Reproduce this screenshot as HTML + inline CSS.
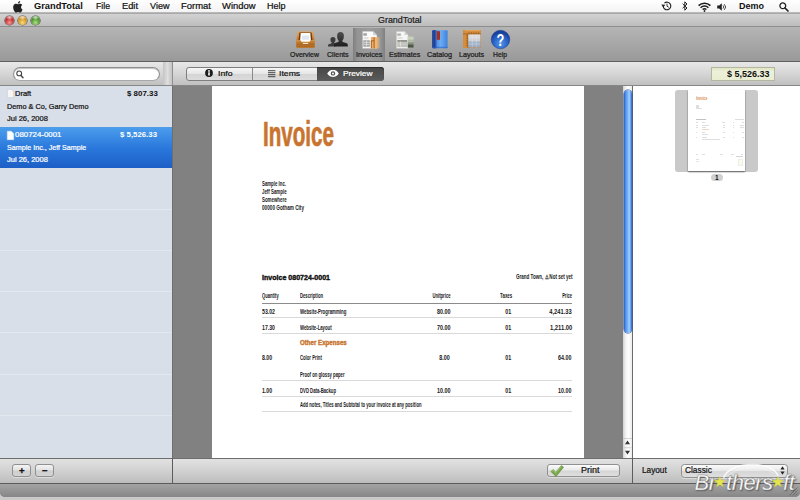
<!DOCTYPE html>
<html><head><meta charset="utf-8"><title>GrandTotal</title>
<style>
html,body{margin:0;padding:0}
body{width:800px;height:500px;overflow:hidden;position:relative;background:#c9c9c9;font-family:"Liberation Sans",sans-serif}
.a{position:absolute}
.t{position:absolute;white-space:nowrap;display:block;-webkit-text-stroke:.22px currentColor}
svg{position:absolute;overflow:visible}
.row{position:absolute;left:0;width:172px;height:1px;background:#e3e8ef}
.hl{position:absolute;left:262px;width:310px;height:1px;background:#d9d9d9}
.btn{position:absolute;border:1px solid #909090;border-radius:3px;background:linear-gradient(#fbfbfb,#e9e9e9 45%,#d6d6d6 55%,#dedede);box-sizing:border-box;box-shadow:0 1px 0 rgba(255,255,255,.4)}
</style></head><body>
<div class="a" style="left:0;top:13px;width:800px;height:484px;background:#808080;border-radius:0 0 5px 5px"></div>
<div class="a" style="left:0;top:0;width:800px;height:13px;background:linear-gradient(#ffffff,#f3f3f3);border-bottom:1px solid #b9b9b9;box-sizing:border-box"></div>
<div class="a" style="left:0;top:13px;width:800px;height:14px;background:linear-gradient(#d2d2d2,#bdbdbd);border-top:1px solid #a8a8a8;border-bottom:1px solid #8e8e8e;box-sizing:border-box"></div>
<div class="a" style="left:0;top:27px;width:800px;height:35px;background:linear-gradient(#b5b5b5,#999999);border-bottom:1px solid #5f5f5f;box-sizing:border-box"></div>
<div class="a" style="left:0;top:62px;width:800px;height:24px;background:linear-gradient(#e8e8e8,#d6d6d6 50%,#c0c0c0);border-bottom:1px solid #878787;box-sizing:border-box"></div>
<div class="a" style="left:163px;top:62px;width:9px;height:23px;background:linear-gradient(90deg,#c4c4c4,#dedede 50%,#c4c4c4)"></div>
<div class="a" style="left:172px;top:62px;width:1px;height:23px;background:#8f8f8f"></div>
<div class="a" style="left:4.9px;top:15.8px;width:9px;height:9px;border-radius:50%;background:radial-gradient(ellipse 38% 26% at 50% 18%,rgba(255,255,255,.75),rgba(255,255,255,0) 100%),radial-gradient(circle at 50% 74%,#f79a92,#b81c20 62%);box-shadow:0 0 0 0.6px rgba(50,40,40,.75),inset 0 1px 1px rgba(255,255,255,.35)"></div>
<div class="a" style="left:18.0px;top:15.8px;width:9px;height:9px;border-radius:50%;background:radial-gradient(ellipse 38% 26% at 50% 18%,rgba(255,255,255,.75),rgba(255,255,255,0) 100%),radial-gradient(circle at 50% 74%,#f8dc80,#c88a14 62%);box-shadow:0 0 0 0.6px rgba(50,40,40,.75),inset 0 1px 1px rgba(255,255,255,.35)"></div>
<div class="a" style="left:31.1px;top:15.8px;width:9px;height:9px;border-radius:50%;background:radial-gradient(ellipse 38% 26% at 50% 18%,rgba(255,255,255,.75),rgba(255,255,255,0) 100%),radial-gradient(circle at 50% 74%,#b4e088,#3c8a22 62%);box-shadow:0 0 0 0.6px rgba(50,40,40,.75),inset 0 1px 1px rgba(255,255,255,.35)"></div>
<div class="a" style="left:353px;top:28px;width:32px;height:33px;background:linear-gradient(90deg,#808080,#949494 14%,#9b9b9b 50%,#949494 86%,#808080)"></div>
<div class="a" style="left:0;top:86px;width:172px;height:372px;background:#d9dfe8"></div>
<div class="row" style="top:209px"></div>
<div class="row" style="top:250px"></div>
<div class="row" style="top:291px"></div>
<div class="row" style="top:332px"></div>
<div class="row" style="top:374px"></div>
<div class="row" style="top:415px"></div>
<div class="a" style="left:0;top:127px;width:172px;height:41px;background:linear-gradient(#4a9cec,#2a78dc 50%,#1c5fc6);border-top:1px solid #4f9be6;box-sizing:border-box"></div>
<div class="a" style="left:172px;top:86px;width:1px;height:397px;background:#6e6e6e"></div>
<div class="a" style="left:12.6px;top:67px;width:147.4px;height:13.6px;border-radius:7px;background:#fff;border:1px solid #8e8e8e;border-bottom-color:#a8a8a8;box-sizing:border-box;box-shadow:inset 0 1px 1px rgba(0,0,0,.25)"></div>
<svg style="left:15.6px;top:69.5px" width="8" height="9" viewBox="0 0 8 9"><circle cx="3.2" cy="3.4" r="2.4" fill="none" stroke="#444" stroke-width="1.1"/><path d="M4.9 5.3L7 7.8" stroke="#444" stroke-width="1.4" stroke-linecap="round"/></svg>
<svg style="left:6.5px;top:89px" width="7" height="9" viewBox="0 0 7 9"><path d="M0.3 0.3H4.4L6.7 2.6V8.7H0.3Z" fill="#f6f6f6" stroke="#c4c8ce" stroke-width=".6"/></svg>
<svg style="left:6.5px;top:130.5px" width="7" height="9" viewBox="0 0 7 9"><path d="M0.3 0.3H4.4L6.7 2.6V8.7H0.3Z" fill="#ffffff" stroke="#dfe9f7" stroke-width=".6"/></svg>
<div class="a" style="left:212px;top:86px;width:372px;height:372px;background:#fff"></div>
<div class="a" style="left:173px;top:86px;width:39px;height:372px;background:#818181"></div>
<div class="a" style="left:584px;top:86px;width:39px;height:372px;background:#818181"></div>
<div class="a" style="left:623px;top:86px;width:10px;height:372px;background:linear-gradient(90deg,#d2d2d2,#f2f2f2 30%,#ffffff 60%,#ececec);border-right:1px solid #6c6c6c;box-sizing:border-box"></div>
<div class="a" style="left:624px;top:90px;width:8px;height:243px;border-radius:4px;background:linear-gradient(90deg,#2a5cc0,#4c8ae8 18%,#7ab2f6 45%,#a0d0fc 66%,#5a98ee 86%,#2a5cc0);box-shadow:0 0 0 .5px #2a4f9a"></div>
<svg style="left:623px;top:438px" width="9" height="21" viewBox="0 0 9 21"><path d="M0 0.5H9" stroke="#bbb" stroke-width=".6"/><path d="M4.5 2.5L7 6.2H2Z M4.5 16.5L7 12.8H2Z" fill="#333"/><path d="M0.5 9.7H8.5" stroke="#bbb" stroke-width=".6"/></svg>
<div class="a" style="left:633px;top:86px;width:167px;height:372px;background:#fff"></div>
<div class="a" style="left:675px;top:90px;width:83px;height:82px;border-radius:3px;background:#c9c9c9"></div>
<div class="a" style="left:688px;top:90px;width:57.2px;height:81.2px;background:#fff;box-shadow:0 1px 1.5px rgba(0,0,0,.55)"></div>
<div class="a" style="left:710.5px;top:173.5px;width:12px;height:7.5px;border-radius:4px;background:#d0d0d0"></div>
<div class="a" style="left:0;top:458px;width:800px;height:26px;background:linear-gradient(#e2e2e2,#cfcfcf 55%,#bdbdbd);border-top:1px solid #6e6e6e;border-bottom:1px solid #5c5c5c;box-sizing:border-box"></div>
<div class="a" style="left:172px;top:458px;width:1px;height:25px;background:#5c5c5c"></div>
<div class="a" style="left:632px;top:458px;width:1px;height:25px;background:#5c5c5c"></div>
<div class="a" style="left:0;top:484px;width:800px;height:13px;background:linear-gradient(#a4a4a4,#868686);border-radius:0 0 5px 5px"></div>
<div class="btn" style="left:12px;top:463.6px;width:18.6px;height:13.8px;background:linear-gradient(#f4f4f4,#e2e2e2 45%,#cfcfcf 55%,#d4d4d4)"></div>
<div class="btn" style="left:35.3px;top:463.6px;width:18.6px;height:13.8px;background:linear-gradient(#f4f4f4,#e2e2e2 45%,#cfcfcf 55%,#d4d4d4)"></div>
<div class="btn" style="left:547px;top:463.8px;width:73px;height:13.4px"></div>
<div class="btn" style="left:681px;top:463.5px;width:107px;height:14px;border-radius:3.5px"></div>
<svg style="left:550px;top:464.5px" width="14" height="12" viewBox="0 0 14 12"><path d="M0.8 6.4L3.4 4.6L5.6 7.4L11.4 0.6L13.6 2.2L6 11.4Z" fill="#78a848" stroke="#557f2e" stroke-width=".5"/><path d="M1.6 6.4L3.3 5.3L5.6 8.2L11.5 1.4" fill="none" stroke="#a6cf7a" stroke-width=".7"/></svg>
<svg style="left:779.5px;top:466px" width="5" height="9" viewBox="0 0 5 9"><path d="M2.5 0.3L4.6 3.4H0.4Z M2.5 8.7L4.6 5.6H0.4Z" fill="#222"/></svg>
<svg style="left:789px;top:487px" width="9" height="9" viewBox="0 0 9 9"><path d="M8.5 0.5L0.5 8.5M8.5 3.5L3.5 8.5M8.5 6.5L6.5 8.5" stroke="#5f5f5f" stroke-width=".7"/></svg>
<div class="a" style="left:185.5px;top:67px;width:198px;height:13.5px;border-radius:3px;border:1px solid #7e7e7e;box-sizing:border-box;background:linear-gradient(#f6f6f6,#e6e6e6 48%,#d4d4d4 52%,#dcdcdc)"></div>
<div class="a" style="left:252px;top:67.5px;width:1px;height:12.5px;background:#8a8a8a"></div>
<div class="a" style="left:317px;top:67px;width:66.5px;height:13.5px;border-radius:0 3px 3px 0;background:linear-gradient(#474747,#5b5b5b);box-shadow:inset 0 1px 1px rgba(0,0,0,.4)"></div>
<svg style="left:205px;top:69.3px" width="8" height="8" viewBox="0 0 8 8"><circle cx="4" cy="4" r="3.9" fill="#1c1c1c"/><rect x="3.2" y="3.3" width="1.6" height="3.2" fill="#fff"/><circle cx="4" cy="1.9" r=".95" fill="#fff"/></svg>
<svg style="left:268px;top:70px" width="8" height="8" viewBox="0 0 8 8"><path d="M0 0.7H7.4M0 2.7H7.4M0 4.7H7.4M0 6.7H7.4" stroke="#333" stroke-width=".9"/></svg>
<svg style="left:327px;top:70px" width="12" height="7" viewBox="0 0 12 7"><path d="M0.2 3.5C2 0.6 4 0.1 6 0.1S10 0.6 11.8 3.5C10 6.4 8 6.9 6 6.9S2 6.4 0.2 3.5Z" fill="#fff"/><circle cx="6" cy="3.4" r="2.2" fill="#4f4f4f"/><circle cx="6" cy="3.4" r="1" fill="#fff"/></svg>
<div class="a" style="left:710.5px;top:67px;width:64px;height:13.5px;background:linear-gradient(#dfe4c3,#eef1da 30%,#e9edd0);border:1px solid #b3b79f;box-sizing:border-box"></div>
<svg style="left:12.6px;top:0.6px" width="9.8" height="11.6" viewBox="3 0 18.2 24"><path fill="#222" d="M12.152 6.896c-.948 0-2.415-1.078-3.96-1.04-2.04.027-3.91 1.183-4.961 3.014-2.117 3.675-.546 9.103 1.519 12.09 1.013 1.454 2.208 3.09 3.792 3.039 1.52-.065 2.09-.987 3.935-.987 1.831 0 2.35.987 3.96.948 1.637-.026 2.676-1.48 3.676-2.948 1.156-1.688 1.636-3.325 1.662-3.415-.039-.013-3.182-1.221-3.22-4.857-.026-3.04 2.48-4.494 2.597-4.559-1.429-2.09-3.623-2.324-4.39-2.376-2-.156-3.675 1.09-4.61 1.09zM15.53 3.83c.843-1.012 1.4-2.427 1.245-3.83-1.207.052-2.662.805-3.532 1.818-.78.896-1.454 2.338-1.273 3.714 1.338.104 2.715-.688 3.559-1.701"/></svg>
<svg style="left:661.4px;top:1.1px" width="11" height="10" viewBox="0 0 11 10"><path d="M2.2 5A3.8 3.8 0 1 0 3.4 2.2" fill="none" stroke="#222" stroke-width="1.1"/><path d="M0.3 3.6L2.3 6.4L4.3 3.8Z" fill="#222"/><path d="M6 2.6V5.2L7.8 6.3" fill="none" stroke="#222" stroke-width=".9"/></svg>
<svg style="left:682.4px;top:1.4px" width="6" height="10" viewBox="0 0 6 10"><path d="M0.6 2.8L5 7L2.8 9.2V0.8L5 3L0.6 7.2" fill="none" stroke="#222" stroke-width="1"/></svg>
<svg style="left:697.7px;top:1.6px" width="13" height="10" viewBox="0 0 13 10"><path d="M0.6 3.6A8.4 8.4 0 0 1 12.4 3.6" fill="none" stroke="#1c1c1c" stroke-width="1.6"/><path d="M2.6 5.7A5.5 5.5 0 0 1 10.4 5.7" fill="none" stroke="#1c1c1c" stroke-width="1.5"/><path d="M4.6 7.6A2.8 2.8 0 0 1 8.4 7.6" fill="none" stroke="#1c1c1c" stroke-width="1.4"/><circle cx="6.5" cy="9" r=".9" fill="#222"/></svg>
<svg style="left:717.2px;top:2.6px" width="10" height="8" viewBox="0 0 10 8"><path d="M0.2 2.6H2.2L4.8 0.3V7.7L2.2 5.4H0.2Z" fill="#222"/><path d="M6 2.4A2.2 2.2 0 0 1 6 5.6M7.3 1.2A4 4 0 0 1 7.3 6.8" fill="none" stroke="#222" stroke-width=".8"/></svg>
<svg style="left:778.5px;top:2px" width="10" height="10" viewBox="0 0 10 10"><circle cx="3.8" cy="3.8" r="2.9" fill="none" stroke="#222" stroke-width="1.3"/><path d="M6 6L9 9" stroke="#222" stroke-width="1.7" stroke-linecap="round"/></svg>
<svg style="left:295.6px;top:30.9px" width="19" height="17" viewBox="0 0 19 17"><defs><linearGradient id="og" x1="0" y1="0" x2="0" y2="1"><stop offset="0" stop-color="#e2a65c"/><stop offset=".5" stop-color="#c98032"/><stop offset="1" stop-color="#b56a22"/></linearGradient></defs><path d="M1.8 0.4H17.2L18.6 8V15.8Q18.6 16.8 17.6 16.8H1.4Q0.4 16.8 0.4 15.8V8Z" fill="url(#og)"/><path d="M3.4 1.5H15.6L16.6 9.8H2.4Z" fill="#70390c"/><path d="M4.7 2.1H14.3L15 10.8H4Z" fill="#fff"/><path d="M6.2 4.4H12.8L13.2 8.8H5.8Z" fill="#e1e7f1"/><path d="M0.4 9.5H4.6Q5.3 11.4 6.8 11.4H12.2Q13.7 11.4 14.4 9.5H18.6V15.8Q18.6 16.8 17.6 16.8H1.4Q0.4 16.8 0.4 15.8Z" fill="#c07a2c"/><path d="M0.4 9.8H4.4M14.6 9.8H18.6" stroke="#e6ac68" stroke-width=".7"/><path d="M0.6 13.2H18.4M0.6 15.2H18.4" stroke="#95561a" stroke-width=".7"/><path d="M6.8 11.8H12.2V13H6.8Z" fill="#f4e2c8"/></svg>
<svg style="left:327px;top:31px" width="21" height="16" viewBox="0 0 21 16"><defs><linearGradient id="pg" x1="0" y1="0" x2="0" y2="1"><stop offset="0" stop-color="#4e4e4e"/><stop offset="1" stop-color="#1e1e1e"/></linearGradient></defs><path d="M1 15.6V14.4Q1 13.2 2.4 12.9L4.2 12.4Q4.7 12.2 4.6 11.6Q3.4 10.4 3.4 8.8Q3.4 6.1 5.9 6.1Q8.5 6.1 8.5 8.8Q8.5 10.4 7.3 11.6Q7.2 12.2 7.7 12.4L8.6 12.6V15.6Z" fill="#3c3c3c"/><path d="M7 15.6V13.6Q7 12.2 8.6 11.8L11.2 11Q11.8 10.7 11.7 9.8Q10.1 8 10.1 5.2Q10.1 1.1 13.5 1.1Q16.9 1.1 16.9 5.2Q16.9 8 15.3 9.8Q15.2 10.7 15.8 11L18.4 11.8Q20.8 12.2 20.8 13.6V15.6Z" fill="url(#pg)"/></svg>
<svg style="left:361.5px;top:30.6px" width="19" height="18" viewBox="0 0 19 18"><defs><linearGradient id="ig" x1="0" y1="0" x2="1" y2="0"><stop offset="0" stop-color="#eda04c" stop-opacity=".95"/><stop offset=".6" stop-color="#f2ae62" stop-opacity=".85"/><stop offset=".8" stop-color="#f4bc80" stop-opacity=".5"/><stop offset="1" stop-color="#f6c48c" stop-opacity="0"/></linearGradient></defs><path d="M0.5 0.3H11L15 4.2V17.4H0.5Z" fill="#fbfbfb" stroke="#b0b0b0" stroke-width=".5"/><path d="M11 0.3V4.2H15Z" fill="#cfd3da"/><path d="M1.6 2.4H4.6V4.4H1.6ZM1.6 7H6.6M1.6 9.4H7.6V15.4H1.6Z" fill="#a4a4a4" stroke="#a4a4a4" stroke-width=".6"/><path d="M1.6 11.4H7.6M1.6 13.4H7.6M4.6 9.4V15.4" stroke="#f4f4f4" stroke-width=".6"/><rect x="8.9" y="6.1" width="9.6" height="11.3" fill="url(#ig)"/><path d="M9.3 9.6V17.2M12.1 6.1V17.4M9.3 9.8H12.1" stroke="#8e5016" stroke-width=".8" fill="none"/></svg>
<svg style="left:395.5px;top:30.6px" width="18" height="18" viewBox="0 0 18 18"><path d="M0.3 0.3H8.6L12.3 3.9V17.4H0.3Z" fill="#f5f6f3" stroke="#b0b0b0" stroke-width=".5"/><path d="M8.6 0.3V3.9H12.3Z" fill="#cdd0c8"/><path d="M1.6 2.8H4.6V4.6H1.6ZM1.6 7H6.6M1.6 9.6H11V15.6H1.6Z" fill="#b0b3ac" stroke="#b0b3ac" stroke-width=".6"/><path d="M1.6 12H11M1.6 13.9H11M4.6 9.6V15.6" stroke="#f1f2ee" stroke-width=".6"/><path d="M1.4 9.9H11.2" stroke="#6c6f68" stroke-width=".9"/><rect x="11.8" y="5.6" width="5.8" height="11" fill="#aeb8a2"/><rect x="11.8" y="5.6" width="5.8" height="2.6" fill="#c8d0bc"/><rect x="11.8" y="10.8" width="5.8" height="2.6" fill="#8a9480"/><rect x="11.8" y="13.4" width="5.8" height="3.2" fill="#50574a"/><path d="M11.8 8.2H17.6M11.8 10.8H17.6" stroke="#dfe5d6" stroke-width=".4"/></svg>
<svg style="left:431.8px;top:30px" width="16" height="18.4" viewBox="0 0 16 18.4"><defs><linearGradient id="cg" x1="0" y1="0" x2="1" y2="0"><stop offset="0" stop-color="#3672d2"/><stop offset=".55" stop-color="#6cacf2"/><stop offset="1" stop-color="#3f82de"/></linearGradient></defs><path d="M0.3 1.2Q0.3 0.3 1.3 0.3H14.6Q15.6 0.3 15.6 1.2V17.2Q15.6 18.2 14.6 18.2H1.3Q0.3 18.2 0.3 17.2Z" fill="url(#cg)"/><path d="M0.3 1.2Q0.3 0.3 1.3 0.3H3.4V18.2H1.3Q0.3 18.2 0.3 17.2Z" fill="#1b3688"/><rect x="1.6" y="0.3" width=".6" height="17.9" fill="#3b62ba"/><rect x="3.4" y="0.3" width="1" height="17.9" fill="#2850ae"/><rect x="4.8" y="1.2" width="3.2" height="8.6" fill="#a6301f"/><rect x="0.3" y="16.8" width="15.3" height="1.4" fill="#2a5cc0" opacity=".55"/></svg>
<svg style="left:462.5px;top:30.2px" width="18" height="18" viewBox="0 0 18 18"><defs><linearGradient id="lg" x1="0" y1="0" x2="0" y2="1"><stop offset="0" stop-color="#e2e1e5"/><stop offset=".45" stop-color="#cdcdd4"/><stop offset=".55" stop-color="#a6b6ca"/><stop offset="1" stop-color="#95a9c2"/></linearGradient></defs><rect x="0" y="0" width="17.8" height="17.9" fill="#c98a4e"/><rect x="0" y="0" width="17.8" height="3.9" fill="#d48e3e"/><rect x="0" y="0" width="4.8" height="17.9" fill="#d48e3e"/><path d="M0 3.9H17.8M4.8 3.9V17.9" stroke="#965616" stroke-width=".7" fill="none"/><path d="M2 0.4H17.4" stroke="#e9b070" stroke-width=".7"/><path d="M6 2.2V3.9M8.4 2.2V3.9M10.8 2.2V3.9M13.2 2.2V3.9M15.6 2.2V3.9M3 6H4.8M3 8.4H4.8M3 10.8H4.8M3 13.2H4.8M3 15.6H4.8" stroke="#8a4d16" stroke-width=".6"/><rect x="5.3" y="4.5" width="12" height="12.9" fill="url(#lg)"/><path d="M5.3 7.7H17.3M5.3 10.9H17.3M5.3 14.1H17.3M9.3 4.5V17.4M13.3 4.5V17.4" stroke="#f0eeee" stroke-width=".45" opacity=".8"/></svg>
<svg style="left:491.1px;top:29.8px" width="19" height="19" viewBox="0 0 19 19"><defs><radialGradient id="hg" cx="50%" cy="72%" r="62%"><stop offset="0" stop-color="#5696ea"/><stop offset=".55" stop-color="#2d68cc"/><stop offset="1" stop-color="#173f9c"/></radialGradient></defs><circle cx="9.5" cy="9.5" r="9.3" fill="url(#hg)" stroke="#1b3f8e" stroke-width=".5"/><text transform="translate(9.5 15.6) scale(.78 1)" text-anchor="middle" font-family="Liberation Sans, sans-serif" font-weight="bold" font-size="16.4" fill="#fff">?</text></svg>
<svg style="left:722px;top:463px" width="58" height="20" viewBox="0 0 58 20"><path d="M1.5 15C5 5.5 18 1.6 30 1.6S53 5 56 13" fill="none" stroke="rgba(255,255,255,.8)" stroke-width="1.5"/><path d="M6 13C10 7.5 20 4.6 31 4.6S48 7 52 11" fill="none" stroke="rgba(255,255,255,.35)" stroke-width="1"/></svg>
<div class="hl" style="top:302.5px;background:#8c8c8c"></div>
<div class="hl" style="top:317px"></div>
<div class="hl" style="top:333px"></div>
<div class="hl" style="top:380px"></div>
<div class="hl" style="top:396px"></div>
<div class="hl" style="top:411px"></div>
<div class="a" style="left:695.7px;top:104.7px;width:3.7px;height:1px;background:#dedede"></div>
<div class="a" style="left:695.7px;top:106.0px;width:3.8px;height:1px;background:#dedede"></div>
<div class="a" style="left:695.7px;top:107.2px;width:3.8px;height:1px;background:#dedede"></div>
<div class="a" style="left:695.7px;top:108.4px;width:6.5px;height:1px;background:#dedede"></div>
<div class="a" style="left:695.7px;top:119.1px;width:10.5px;height:1px;background:#c2c2c2"></div>
<div class="a" style="left:735.0px;top:119.1px;width:8.7px;height:1px;background:#dedede"></div>
<div class="a" style="left:695.7px;top:122.1px;width:2.6px;height:1px;background:#dedede"></div>
<div class="a" style="left:701.6px;top:122.1px;width:3.6px;height:1px;background:#dedede"></div>
<div class="a" style="left:722.0px;top:122.1px;width:2.8px;height:1px;background:#dedede"></div>
<div class="a" style="left:732.5px;top:122.1px;width:1.9px;height:1px;background:#dedede"></div>
<div class="a" style="left:742.1px;top:122.1px;width:1.5px;height:1px;background:#dedede"></div>
<div class="a" style="left:695.7px;top:124.5px;width:2.0px;height:1px;background:#dedede"></div>
<div class="a" style="left:701.6px;top:124.5px;width:7.2px;height:1px;background:#dedede"></div>
<div class="a" style="left:722.7px;top:124.5px;width:2.1px;height:1px;background:#dedede"></div>
<div class="a" style="left:733.4px;top:124.5px;width:1.0px;height:1px;background:#dedede"></div>
<div class="a" style="left:740.2px;top:124.5px;width:3.5px;height:1px;background:#dedede"></div>
<div class="a" style="left:695.7px;top:126.9px;width:2.0px;height:1px;background:#dedede"></div>
<div class="a" style="left:701.6px;top:126.9px;width:4.9px;height:1px;background:#dedede"></div>
<div class="a" style="left:722.7px;top:126.9px;width:2.1px;height:1px;background:#dedede"></div>
<div class="a" style="left:733.4px;top:126.9px;width:1.0px;height:1px;background:#dedede"></div>
<div class="a" style="left:740.2px;top:126.9px;width:3.5px;height:1px;background:#dedede"></div>
<div class="a" style="left:701.6px;top:129.2px;width:7.2px;height:1px;background:#f0d6c0"></div>
<div class="a" style="left:695.7px;top:131.7px;width:1.6px;height:1px;background:#dedede"></div>
<div class="a" style="left:701.6px;top:131.7px;width:3.4px;height:1px;background:#dedede"></div>
<div class="a" style="left:723.2px;top:131.7px;width:1.6px;height:1px;background:#dedede"></div>
<div class="a" style="left:733.4px;top:131.7px;width:1.0px;height:1px;background:#dedede"></div>
<div class="a" style="left:741.6px;top:131.7px;width:2.1px;height:1px;background:#dedede"></div>
<div class="a" style="left:701.6px;top:134.3px;width:6.9px;height:1px;background:#dedede"></div>
<div class="a" style="left:695.7px;top:136.7px;width:1.6px;height:1px;background:#dedede"></div>
<div class="a" style="left:701.6px;top:136.7px;width:5.6px;height:1px;background:#dedede"></div>
<div class="a" style="left:722.7px;top:136.7px;width:2.1px;height:1px;background:#dedede"></div>
<div class="a" style="left:733.4px;top:136.7px;width:1.0px;height:1px;background:#dedede"></div>
<div class="a" style="left:741.6px;top:136.7px;width:2.1px;height:1px;background:#dedede"></div>
<div class="a" style="left:701.6px;top:138.9px;width:18.8px;height:1px;background:#dedede"></div>
<div class="a" style="left:702px;top:154.3px;width:3px;height:1px;background:#e0e0e0"></div>
<div class="a" style="left:720px;top:154.3px;width:3px;height:1px;background:#e0e0e0"></div>
<div class="a" style="left:730.5px;top:154.3px;width:3px;height:1px;background:#e0e0e0"></div>
<div class="a" style="left:740.5px;top:154.3px;width:2.5px;height:1px;background:#e0e0e0"></div>
<div class="a" style="left:736px;top:156.4px;width:7px;height:1px;background:#d4d4d4"></div>
<div class="a" style="left:696px;top:154.3px;width:1.5px;height:1px;background:#e0e0e0"></div>
<div class="a" style="left:696px;top:159.2px;width:3px;height:1px;background:#e0e0e0"></div>
<div class="a" style="left:696px;top:160.6px;width:2.5px;height:1px;background:#e6e6e6"></div>
<div class="a" style="left:737.8px;top:159px;width:5px;height:6.5px;background:#fafaf0;border:.5px solid #f0f0e2;box-sizing:border-box"></div>
<span class="t" style="left:34.20px;transform-origin:0 50%;top:2.20px;font-size:9px;line-height:9px;color:#111;font-weight:bold;-webkit-text-stroke:0;transform:scaleX(1.0308);">GrandTotal</span>
<span class="t" style="left:96.00px;transform-origin:0 50%;top:2.20px;font-size:9px;line-height:9px;color:#111;transform:scaleX(0.9645);">File</span>
<span class="t" style="left:122.00px;transform-origin:0 50%;top:2.20px;font-size:9px;line-height:9px;color:#111;transform:scaleX(1.0312);">Edit</span>
<span class="t" style="left:150.00px;transform-origin:0 50%;top:2.20px;font-size:9px;line-height:9px;color:#111;transform:scaleX(1.0073);">View</span>
<span class="t" style="left:180.50px;transform-origin:0 50%;top:2.20px;font-size:9px;line-height:9px;color:#111;transform:scaleX(1.0521);">Format</span>
<span class="t" style="left:221.50px;transform-origin:0 50%;top:2.20px;font-size:9px;line-height:9px;color:#111;transform:scaleX(1.0464);">Window</span>
<span class="t" style="left:266.50px;transform-origin:0 50%;top:2.20px;font-size:9px;line-height:9px;color:#111;transform:scaleX(0.9992);">Help</span>
<span class="t" style="left:739.40px;transform-origin:0 50%;top:2.20px;font-size:9px;line-height:9px;color:#111;font-weight:bold;-webkit-text-stroke:0;transform:scaleX(0.9994);">Demo</span>
<span class="t" style="left:378.40px;transform-origin:0 50%;top:16.59px;font-size:8.2px;line-height:8.2px;color:#222;transform:scaleX(1.0883);">GrandTotal</span>
<span class="t" style="left:289.80px;transform-origin:0 50%;top:51.18px;font-size:7px;line-height:7px;color:#1a1a1a;transform:scaleX(0.9936);">Overview</span>
<span class="t" style="left:326.80px;transform-origin:0 50%;top:51.18px;font-size:7px;line-height:7px;color:#1a1a1a;transform:scaleX(1.0091);">Clients</span>
<span class="t" style="left:355.70px;transform-origin:0 50%;top:51.18px;font-size:7px;line-height:7px;color:#1a1a1a;transform:scaleX(1.0238);">Invoices</span>
<span class="t" style="left:389.00px;transform-origin:0 50%;top:51.18px;font-size:7px;line-height:7px;color:#1a1a1a;transform:scaleX(1.0151);">Estimates</span>
<span class="t" style="left:426.90px;transform-origin:0 50%;top:51.18px;font-size:7px;line-height:7px;color:#1a1a1a;transform:scaleX(1.0397);">Catalog</span>
<span class="t" style="left:458.70px;transform-origin:0 50%;top:51.18px;font-size:7px;line-height:7px;color:#1a1a1a;transform:scaleX(1.0232);">Layouts</span>
<span class="t" style="left:493.10px;transform-origin:0 50%;top:51.18px;font-size:7px;line-height:7px;color:#1a1a1a;transform:scaleX(0.9649);">Help</span>
<span class="t" style="left:217.80px;transform-origin:0 50%;top:69.69px;font-size:8px;line-height:8px;color:#111;transform:scaleX(1.0867);">Info</span>
<span class="t" style="left:278.80px;transform-origin:0 50%;top:69.69px;font-size:8px;line-height:8px;color:#111;transform:scaleX(1.0837);">Items</span>
<span class="t" style="left:342.60px;transform-origin:0 50%;top:69.69px;font-size:8px;line-height:8px;color:#fff;transform:scaleX(1.0333);">Preview</span>
<span class="t" style="left:727.00px;transform-origin:0 50%;top:69.60px;font-size:8.6px;line-height:8.6px;color:#111;font-weight:bold;-webkit-text-stroke:0;transform:scaleX(1.0462);">$ 5,526.33</span>
<span class="t" style="left:14.60px;transform-origin:0 50%;top:89.88px;font-size:7.2px;line-height:7.2px;color:#111;transform:scaleX(1.0399);">Draft</span>
<span class="t" style="left:126.60px;transform-origin:0 50%;top:89.88px;font-size:7.2px;line-height:7.2px;color:#111;font-weight:bold;-webkit-text-stroke:0;transform:scaleX(1.1006);">$ 807.33</span>
<span class="t" style="left:6.70px;transform-origin:0 50%;top:102.68px;font-size:7.2px;line-height:7.2px;color:#111;transform:scaleX(1.0152);">Demo &amp; Co, Garry Demo</span>
<span class="t" style="left:6.70px;transform-origin:0 50%;top:114.78px;font-size:7.2px;line-height:7.2px;color:#111;transform:scaleX(1.0441);">Jul 26, 2008</span>
<span class="t" style="left:14.60px;transform-origin:0 50%;top:131.48px;font-size:7.2px;line-height:7.2px;color:#fff;transform:scaleX(1.0950);">080724-0001</span>
<span class="t" style="left:120.40px;transform-origin:0 50%;top:131.48px;font-size:7.2px;line-height:7.2px;color:#fff;font-weight:bold;-webkit-text-stroke:0;transform:scaleX(1.0887);">$ 5,526.33</span>
<span class="t" style="left:6.70px;transform-origin:0 50%;top:144.18px;font-size:7.2px;line-height:7.2px;color:#fff;transform:scaleX(0.9940);">Sample Inc., Jeff Sample</span>
<span class="t" style="left:6.70px;transform-origin:0 50%;top:156.08px;font-size:7.2px;line-height:7.2px;color:#fff;transform:scaleX(1.0441);">Jul 26, 2008</span>
<span class="t" style="left:18.80px;transform-origin:0 50%;top:465.96px;font-size:9.5px;line-height:9.5px;color:#111;font-weight:bold;transform:scaleX(1.0067);-webkit-text-stroke:.3px #111;">+</span>
<span class="t" style="left:42.30px;transform-origin:0 50%;top:465.96px;font-size:9.5px;line-height:9.5px;color:#111;font-weight:bold;transform:scaleX(1.0067);-webkit-text-stroke:.3px #111;">−</span>
<span class="t" style="left:580.60px;transform-origin:0 50%;top:466.30px;font-size:8.8px;line-height:8.8px;color:#111;transform:scaleX(1.0169);">Print</span>
<span class="t" style="left:642.00px;transform-origin:0 50%;top:466.30px;font-size:8.8px;line-height:8.8px;color:#111;transform:scaleX(0.9348);">Layout</span>
<span class="t" style="left:685.20px;transform-origin:0 50%;top:466.30px;font-size:8.8px;line-height:8.8px;color:#111;transform:scaleX(0.9450);">Classic</span>
<span class="t" style="left:715.00px;transform-origin:0 50%;top:173.78px;font-size:7px;line-height:7px;color:#111;font-weight:bold;-webkit-text-stroke:0;transform:scaleX(0.9216);">1</span>
<span class="t" style="left:262.50px;transform-origin:0 50%;top:115.90px;font-size:35px;line-height:35px;color:#c8742f;font-weight:bold;transform:scaleX(0.5887);-webkit-text-stroke:.7px #c8742f;">Invoice</span>
<span class="t" style="left:262.00px;transform-origin:0 50%;top:181.28px;font-size:6.6px;line-height:6.6px;color:#1a1a1a;font-weight:bold;transform:scaleX(0.6547);-webkit-text-stroke:0;">Sample Inc.</span>
<span class="t" style="left:262.00px;transform-origin:0 50%;top:189.18px;font-size:6.6px;line-height:6.6px;color:#1a1a1a;font-weight:bold;transform:scaleX(0.6646);-webkit-text-stroke:0;">Jeff Sample</span>
<span class="t" style="left:262.00px;transform-origin:0 50%;top:197.18px;font-size:6.6px;line-height:6.6px;color:#1a1a1a;font-weight:bold;transform:scaleX(0.6646);-webkit-text-stroke:0;">Somewhere</span>
<span class="t" style="left:262.00px;transform-origin:0 50%;top:205.18px;font-size:6.6px;line-height:6.6px;color:#1a1a1a;font-weight:bold;transform:scaleX(0.7074);-webkit-text-stroke:0;">00000 Gotham City</span>
<span class="t" style="left:261.80px;transform-origin:0 50%;top:273.89px;font-size:7.4px;line-height:7.4px;color:#111;font-weight:bold;transform:scaleX(0.9565);-webkit-text-stroke:.4px #111;">Invoice 080724-0001</span>
<span class="t" style="left:516.00px;transform-origin:0 50%;top:274.37px;font-size:6.4px;line-height:6.4px;color:#1a1a1a;font-weight:bold;transform:scaleX(0.7079);-webkit-text-stroke:0;">Grand Town, ⚠ Not set yet</span>
<span class="t" style="left:262.00px;transform-origin:0 50%;top:293.48px;font-size:6.6px;line-height:6.6px;color:#1a1a1a;font-weight:bold;transform:scaleX(0.6243);-webkit-text-stroke:0;">Quantity</span>
<span class="t" style="left:300.00px;transform-origin:0 50%;top:293.48px;font-size:6.6px;line-height:6.6px;color:#1a1a1a;font-weight:bold;transform:scaleX(0.6339);-webkit-text-stroke:0;">Description</span>
<span class="t" style="right:349.80px;transform-origin:100% 50%;top:293.48px;font-size:6.6px;line-height:6.6px;color:#1a1a1a;font-weight:bold;transform:scaleX(0.6369);-webkit-text-stroke:0;">Unitprice</span>
<span class="t" style="right:288.20px;transform-origin:100% 50%;top:293.48px;font-size:6.6px;line-height:6.6px;color:#1a1a1a;font-weight:bold;transform:scaleX(0.6642);-webkit-text-stroke:0;">Taxes</span>
<span class="t" style="right:228.00px;transform-origin:100% 50%;top:293.48px;font-size:6.6px;line-height:6.6px;color:#1a1a1a;font-weight:bold;transform:scaleX(0.6196);-webkit-text-stroke:0;">Price</span>
<span class="t" style="left:262.00px;transform-origin:0 50%;top:308.98px;font-size:6.6px;line-height:6.6px;color:#1a1a1a;font-weight:bold;transform:scaleX(0.7871);-webkit-text-stroke:0;">53.02</span>
<span class="t" style="left:300.00px;transform-origin:0 50%;top:308.98px;font-size:6.6px;line-height:6.6px;color:#1a1a1a;font-weight:bold;transform:scaleX(0.6592);-webkit-text-stroke:0;">Website-Programming</span>
<span class="t" style="right:349.80px;transform-origin:100% 50%;top:308.98px;font-size:6.6px;line-height:6.6px;color:#1a1a1a;font-weight:bold;transform:scaleX(0.8235);-webkit-text-stroke:0;">80.00</span>
<span class="t" style="right:288.20px;transform-origin:100% 50%;top:308.98px;font-size:6.6px;line-height:6.6px;color:#1a1a1a;font-weight:bold;transform:scaleX(0.8170);-webkit-text-stroke:0;">01</span>
<span class="t" style="right:228.00px;transform-origin:100% 50%;top:308.98px;font-size:6.6px;line-height:6.6px;color:#1a1a1a;font-weight:bold;transform:scaleX(0.8726);-webkit-text-stroke:0;">4,241.33</span>
<span class="t" style="left:262.00px;transform-origin:0 50%;top:324.68px;font-size:6.6px;line-height:6.6px;color:#1a1a1a;font-weight:bold;transform:scaleX(0.7871);-webkit-text-stroke:0;">17.30</span>
<span class="t" style="left:300.00px;transform-origin:0 50%;top:324.68px;font-size:6.6px;line-height:6.6px;color:#1a1a1a;font-weight:bold;transform:scaleX(0.6451);-webkit-text-stroke:0;">Website-Layout</span>
<span class="t" style="right:349.80px;transform-origin:100% 50%;top:324.68px;font-size:6.6px;line-height:6.6px;color:#1a1a1a;font-weight:bold;transform:scaleX(0.8235);-webkit-text-stroke:0;">70.00</span>
<span class="t" style="right:288.20px;transform-origin:100% 50%;top:324.68px;font-size:6.6px;line-height:6.6px;color:#1a1a1a;font-weight:bold;transform:scaleX(0.8170);-webkit-text-stroke:0;">01</span>
<span class="t" style="right:228.00px;transform-origin:100% 50%;top:324.68px;font-size:6.6px;line-height:6.6px;color:#1a1a1a;font-weight:bold;transform:scaleX(0.8849);-webkit-text-stroke:0;">1,211.00</span>
<span class="t" style="left:300.00px;transform-origin:0 50%;top:339.48px;font-size:7px;line-height:7px;color:#c8742f;font-weight:bold;transform:scaleX(0.8778);-webkit-text-stroke:.4px #c8742f;">Other Expenses</span>
<span class="t" style="left:262.00px;transform-origin:0 50%;top:355.38px;font-size:6.6px;line-height:6.6px;color:#1a1a1a;font-weight:bold;transform:scaleX(0.7942);-webkit-text-stroke:0;">8.00</span>
<span class="t" style="left:300.00px;transform-origin:0 50%;top:355.38px;font-size:6.6px;line-height:6.6px;color:#1a1a1a;font-weight:bold;transform:scaleX(0.6397);-webkit-text-stroke:0;">Color Print</span>
<span class="t" style="right:349.80px;transform-origin:100% 50%;top:355.38px;font-size:6.6px;line-height:6.6px;color:#1a1a1a;font-weight:bold;transform:scaleX(0.8253);-webkit-text-stroke:0;">8.00</span>
<span class="t" style="right:288.20px;transform-origin:100% 50%;top:355.38px;font-size:6.6px;line-height:6.6px;color:#1a1a1a;font-weight:bold;transform:scaleX(0.8170);-webkit-text-stroke:0;">01</span>
<span class="t" style="right:228.00px;transform-origin:100% 50%;top:355.38px;font-size:6.6px;line-height:6.6px;color:#1a1a1a;font-weight:bold;transform:scaleX(0.8114);-webkit-text-stroke:0;">64.00</span>
<span class="t" style="left:300.00px;transform-origin:0 50%;top:372.28px;font-size:6.6px;line-height:6.6px;color:#1a1a1a;font-weight:bold;transform:scaleX(0.6406);-webkit-text-stroke:0;">Proof on glossy paper</span>
<span class="t" style="left:262.00px;transform-origin:0 50%;top:387.88px;font-size:6.6px;line-height:6.6px;color:#1a1a1a;font-weight:bold;transform:scaleX(0.7942);-webkit-text-stroke:0;">1.00</span>
<span class="t" style="left:300.00px;transform-origin:0 50%;top:387.88px;font-size:6.6px;line-height:6.6px;color:#1a1a1a;font-weight:bold;transform:scaleX(0.6421);-webkit-text-stroke:0;">DVD Data-Backup</span>
<span class="t" style="right:349.80px;transform-origin:100% 50%;top:387.88px;font-size:6.6px;line-height:6.6px;color:#1a1a1a;font-weight:bold;transform:scaleX(0.8235);-webkit-text-stroke:0;">10.00</span>
<span class="t" style="right:288.20px;transform-origin:100% 50%;top:387.88px;font-size:6.6px;line-height:6.6px;color:#1a1a1a;font-weight:bold;transform:scaleX(0.8170);-webkit-text-stroke:0;">01</span>
<span class="t" style="right:228.00px;transform-origin:100% 50%;top:387.88px;font-size:6.6px;line-height:6.6px;color:#1a1a1a;font-weight:bold;transform:scaleX(0.8114);-webkit-text-stroke:0;">10.00</span>
<span class="t" style="left:300.00px;transform-origin:0 50%;top:402.48px;font-size:6.6px;line-height:6.6px;color:#1a1a1a;font-weight:bold;transform:scaleX(0.6333);-webkit-text-stroke:0;">Add notes, Titles and Subtotal to your invoice at any position</span>
<span class="t" style="left:695.60px;transform-origin:0 50%;top:96.36px;font-size:5.2px;line-height:5.2px;color:#d68a4c;font-weight:bold;-webkit-text-stroke:0;transform:scaleX(0.6260);">Invoice</span><div class="t" style="left:694.5px;top:468.8px;font-size:22px;line-height:26px;font-style:italic;color:#fdfdfd;letter-spacing:-0.45px;-webkit-text-stroke:.4px rgba(140,140,140,.9);text-shadow:0 0 1px #777,1px 1px 1.5px rgba(60,60,60,.7)">Br<span style="color:#e4e44e;font-style:normal;font-size:14.5px;letter-spacing:-2px;vertical-align:3px;margin-left:-2.2px;margin-right:1.6px;-webkit-text-stroke:0;text-shadow:0 0 1px #8a8a3a">★</span>thers<span style="color:#e4e44e;font-style:normal;font-size:14.5px;letter-spacing:-2px;vertical-align:3px;margin-left:-2.2px;margin-right:1.6px;-webkit-text-stroke:0;text-shadow:0 0 1px #8a8a3a">★</span>ft</div>
</body></html>
